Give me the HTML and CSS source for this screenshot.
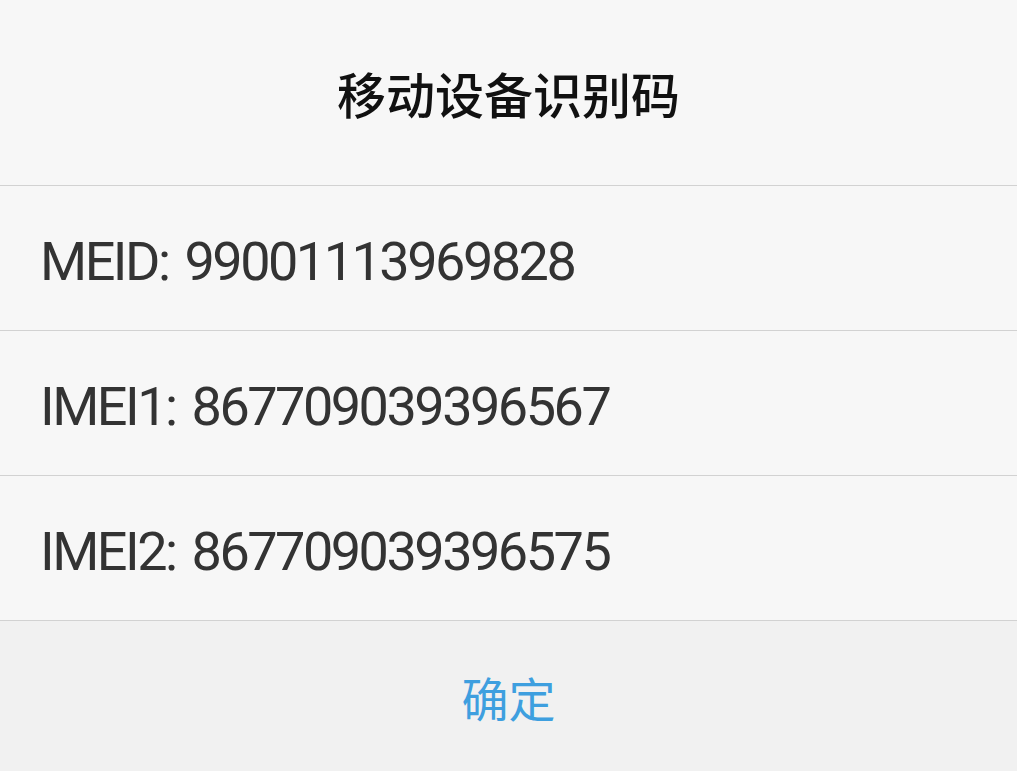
FILE: index.html
```html
<!DOCTYPE html>
<html lang="zh-CN">
  <head>
    <meta charset="UTF-8" />
    <meta name="viewport" content="width=device-width, initial-scale=1.0" />
    <title>移动设备识别码</title>
    <link rel="stylesheet" href="styles.css">
  </head>
  <body>
    <div class="dialog">
      <div class="dialog-title">移动设备识别码</div>

      <div class="row">MEID: 99001113969828</div>
      <div class="row">IMEI1: 867709039396567</div>
      <div class="row">IMEI2: 867709039396575</div>

      <div class="dialog-footer">
        <span class="btn-ok">确定</span>
      </div>
    </div>
  </body>
</html>
```

FILE: styles.css
```css
/* Reset */
body {
  margin: 0;
  padding: 0;
  background-color: #f7f7f7;
  font-family: Roboto, "Noto Sans CJK SC", sans-serif;
}

/* Dialog layout */
.dialog {
  width: 1017px;
  height: 771px;
  display: flex;
  flex-direction: column;
  background-color: #f7f7f7;
}

/* Title */
.dialog-title {
  height: 185px;
  flex-shrink: 0;
  display: flex;
  align-items: center;
  justify-content: center;
  font-family: "Noto Sans CJK SC", sans-serif;
  font-size: 49px;
  font-weight: 500;
  color: #111;
  border-bottom: 1px solid #d2d2d2;
}

/* Info rows */
.row {
  height: 145px;
  flex-shrink: 0;
  display: flex;
  align-items: center;
  padding-left: 40px;
  padding-top: 6px;
  box-sizing: border-box;
  font-size: 54px;
  letter-spacing: -2.5px;
  word-spacing: 5px;
  color: #333;
  border-bottom: 1px solid #d2d2d2;
}

/* Footer button */
.dialog-footer {
  flex: 1;
  display: flex;
  align-items: center;
  justify-content: center;
  background-color: #f1f1f1;
}

.btn-ok {
  font-family: "Noto Sans CJK SC", sans-serif;
  font-size: 47px;
  color: #3e9fdf;
}
```
